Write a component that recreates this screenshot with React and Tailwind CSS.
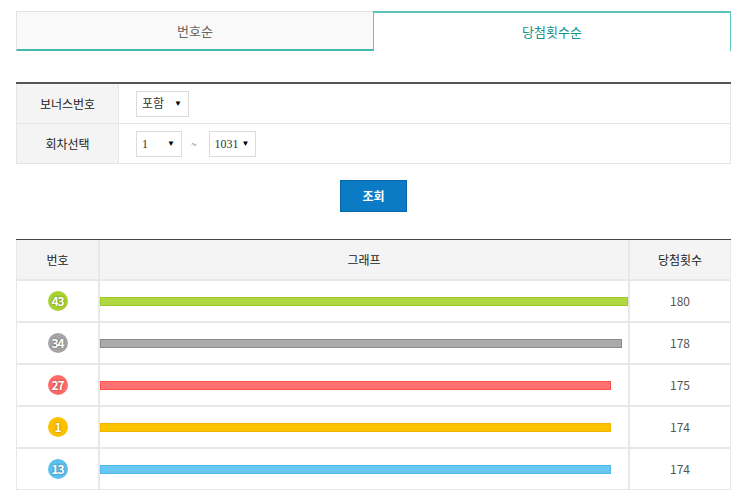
import React from "react";

const rows = [
  { no: 43, count: 180, bar: 528, ball: "bg-[#a9d12f]", fill: "bg-[#b0d840] border-[#9cc62a]" },
  { no: 34, count: 178, bar: 522, ball: "bg-[#a5a5a5]", fill: "bg-[#aaaaaa] border-[#8a8a8a]" },
  { no: 27, count: 175, bar: 511, ball: "bg-[#ff6a6a]", fill: "bg-[#ff7272] border-[#ff5050]" },
  { no: 1, count: 174, bar: 511, ball: "bg-[#fbc000]", fill: "bg-[#fbc400] border-[#f2b400]" },
  { no: 13, count: 174, bar: 511, ball: "bg-[#5cc0ee]", fill: "bg-[#69c8f2] border-[#4db8ea]" },
];

function Select({ value, width }) {
  return (
    <div
      className={`${width} h-[26px] border border-[#dcdcdc] bg-white flex items-center justify-between pl-[5px] pr-[6px] text-[12px] text-[#333]`}
      style={{ fontFamily: '"Liberation Serif", "Noto Sans CJK KR", serif' }}
    >
      <span>{value}</span>
      <span className="text-[8px] text-black ml-[3px]">▼</span>
    </div>
  );
}

export default function App() {
  return (
    <div
      className="w-[740px] h-[490px] bg-white overflow-hidden"
      style={{ fontFamily: '"Noto Sans CJK KR", "Noto Sans", sans-serif' }}
    >
      <div className="ml-4 w-[715px] pt-[11px]">
        {/* tabs */}
        <div className="flex h-[40px]">
          <div className="w-[357px] flex items-center justify-center bg-[#f9f9f9] border-t border-l border-[#e3e3e3] border-b-2 border-b-[#45b9b1] text-[13px] text-[#666]">
            번호순
          </div>
          <div className="flex-1 flex items-center justify-center bg-white border-t-2 border-x border-[#5cc4bb] text-[13px] text-[#13908a]">
            당첨횟수순
          </div>
        </div>

        {/* search form */}
        <div className="mt-[31px] border-t-2 border-[#555]">
          <div className="flex h-[40px] border-b border-[#e5e5e5]">
            <div className="w-[103px] bg-[#f4f4f4] border-l border-r border-[#e5e5e5] flex items-center justify-center text-[12px] text-[#222]">
              보너스번호
            </div>
            <div className="flex-1 border-r border-[#e5e5e5] flex items-center pl-[17px]">
              <Select value="포함" width="w-[53px]" />
            </div>
          </div>
          <div className="flex h-[40px] border-b border-[#e5e5e5]">
            <div className="w-[103px] bg-[#f4f4f4] border-l border-r border-[#e5e5e5] flex items-center justify-center text-[12px] text-[#222]">
              회차선택
            </div>
            <div className="flex-1 border-r border-[#e5e5e5] flex items-center pl-[17px]">
              <Select value="1" width="w-[46px]" />
              <span className="ml-[9px] mr-[12px] text-[10px] text-[#888]">~</span>
              <Select value="1031" width="w-[47px]" />
            </div>
          </div>
        </div>

        {/* button */}
        <div className="flex justify-center mt-[16px]">
          <button
            type="button"
            className="w-[67px] h-[32px] bg-[#0a7bc4] border border-[#0867a8] text-white text-[12px] font-bold"
          >
            조회
          </button>
        </div>

        {/* results table */}
        <div className="mt-[27px] border-t border-[#444]">
          <div className="flex h-[41px] bg-[#f4f4f4] border-b-2 border-[#e8e8e8] text-[12px] text-[#222]">
            <div className="w-[84px] border-l border-r-2 border-[#e8e8e8] flex items-center justify-center">번호</div>
            <div className="w-[528px] flex items-center justify-center">그래프</div>
            <div className="flex-1 border-l-2 border-r border-[#e8e8e8] flex items-center justify-center">당첨횟수</div>
          </div>
          {rows.map((r) => (
            <div key={r.no} className="flex h-[42px] border-b-2 border-[#e8e8e8]">
              <div className="w-[84px] border-l border-r-2 border-[#e8e8e8] flex items-center justify-center">
                <div
                  className={`${r.ball} w-[20px] h-[20px] rounded-full flex items-center justify-center text-white text-[12px] font-bold tracking-[-1px]`}
                  style={{ textShadow: "0 0 2px rgba(0,0,0,0.5)" }}
                >
                  {r.no}
                </div>
              </div>
              <div className="w-[528px] flex items-center">
                <div className={`${r.fill} h-[9px] border`} style={{ width: r.bar }} />
              </div>
              <div className="flex-1 border-l-2 border-r border-[#e8e8e8] flex items-center justify-center text-[12px] text-[#555]">
                {r.count}
              </div>
            </div>
          ))}
        </div>
      </div>
    </div>
  );
}
